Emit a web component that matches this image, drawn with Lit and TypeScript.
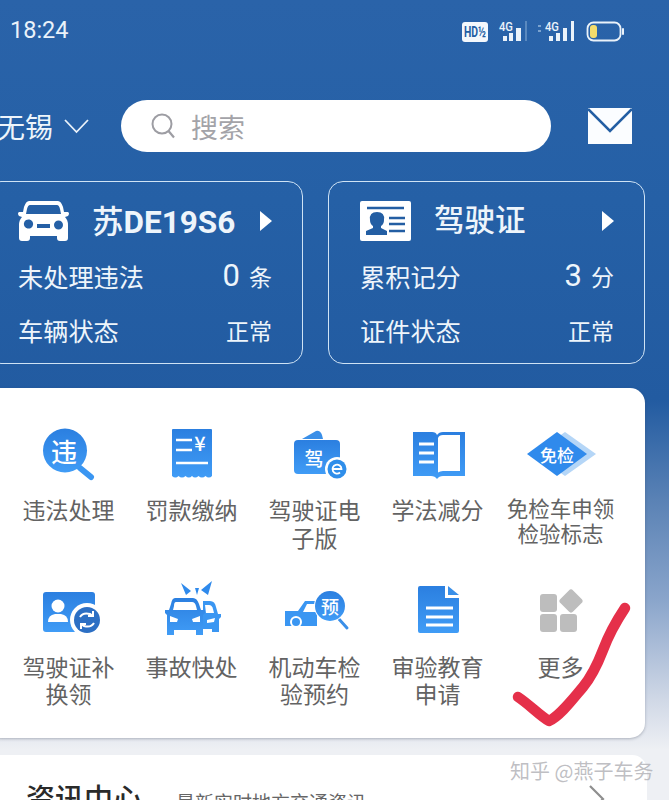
import { LitElement, html, css, svg } from "lit";
import { customElement } from "lit/decorators.js";

const grad = svg`<defs><linearGradient id="b" x1="0" y1="0" x2="0" y2="1"><stop offset="0" stop-color="#2b7fe0"/><stop offset="1" stop-color="#409cf6"/></linearGradient></defs>`;

const iconText = (x: number, y: number, size: number, t: string) =>
  svg`<text x=${x} y=${y} font-size=${size} fill="#fff" text-anchor="middle" dominant-baseline="central" font-weight="500" font-family="'Noto Sans CJK SC', sans-serif">${t}</text>`;

const icons: Record<string, unknown> = {
  weifa: svg`${grad}<path d="M41 41 L52 50" stroke="#3a96f2" stroke-width="6" stroke-linecap="round"/><circle cx="26" cy="23.5" r="22" fill="url(#b)"/>${iconText(25, 23, 26, "违")}`,
  fine: svg`${grad}<path d="M11 2 H49 Q50 2 50 3 V49 Q47 52 43.500 49 Q40 52 36.500 49 Q33 52 30 49 Q27 52 23.500 49 Q20 52 16.500 49 Q13.500 52 10 49 V3 Q10 2 11 2 Z" fill="url(#b)"/><path d="M14 13 H30 M14 23 H30 M14 36 H46" stroke="#fff" stroke-width="2.400"/>${iconText(38, 15, 20, "¥")}`,
  wallet: svg`${grad}<path d="M17 12 L31 4 Q35 3 37 8 L38 12 Z" fill="#3a8fe8"/><rect x="9" y="13" width="46" height="34" rx="4" fill="url(#b)"/>${iconText(29, 30, 19, "驾")}<circle cx="52" cy="42" r="12" fill="#fff"/><circle cx="52" cy="42" r="9.500" fill="#2f8eea"/><path d="M47.500 42 H56.500 A4.500 4.500 0 1 0 55 45.500" fill="none" stroke="#fff" stroke-width="1.800"/>`,
  book: svg`${grad}<path d="M5 5 H24 Q28 5 29 8 Q31 5 35 5 H57 V49 H35 Q31 49 29 52 Q27 49 23 49 H5 Z" fill="url(#b)"/><path d="M30 11 Q31 8 35 8 H52 V44 H35 Q32 44 30 45.500 Z" fill="#fff"/><path d="M11 17 H26 M11 26 H26 M11 35 H26" stroke="#fff" stroke-width="3.200"/>`,
  exempt: svg`<path d="M34 5 L65 27 L34 49 L3 27 Z" fill="#b5d6f7"/><path d="M26 5 L56 27 L26 49 L-4 27 Z" fill="#2f8aec"/>${iconText(26, 27, 17, "免检")}`,
  renew: svg`${grad}<rect x="4" y="8" width="52" height="40" rx="3" fill="url(#b)"/><circle cx="19" cy="22" r="6.500" fill="#fff"/><path d="M9 38 Q9 31 16 30 H22 Q29 31 29 38 Z" fill="#fff"/><circle cx="48" cy="36" r="17" fill="#fff"/><circle cx="48" cy="36" r="13" fill="#2c6fc4"/><path d="M41 33 Q44 28 51 30 L54 32 M54 27 V32 H49 M55 39 Q52 44 45 42 L42 40 M42 45 V40 H47" fill="none" stroke="#fff" stroke-width="2"/>`,
  crash: svg`${grad}<path d="M19 -1 L29 7 L24 11 Z M50 -3 L46 11 L39 6 Z M33 4 L37 4 L35 11 Z" fill="#2f8aec"/><path d="M41 17 H48 Q53 17 54 23 L56 30 H59 V33 L57 35 V48 H50 V45 H41 Z" fill="#3a96f2"/><path d="M43 21 H47 Q50 21 51 25 L52 29 H44 Z" fill="#fff"/><path d="M45 36 L53 34 L52 38 L45 39 Z" fill="#fff"/><path d="M13 14 H31 Q35 14 37 20 L39 26 H43 V29 L41 31 V51 H34 V46 H12 V51 H5 V31 L3 29 V26 H7 L9 20 Q10 14 13 14 Z" fill="url(#b)"/><path d="M14 18 H30 Q33 18 34 22 L35 26 H11 L12 22 Q12 18 14 18 Z" fill="#fff"/><path d="M8 32 L16 35 L15 38 H8 Z M38 32 L30 35 L31 38 H38 Z" fill="#fff"/>`,
  inspect: svg`${grad}<path d="M0 27 H13 L20 17 H32 V42 H0 Z" fill="#3a96f2"/><path d="M22 20 H32 V28 H18 Z" fill="#fff"/><circle cx="11" cy="38" r="6" fill="#fff"/><circle cx="11" cy="38" r="4" fill="#3a96f2"/><path d="M53 34 L62 44" stroke="#3a8fe8" stroke-width="3" stroke-linecap="round"/><circle cx="45" cy="22" r="16" fill="#fff"/><circle cx="45" cy="22" r="15" fill="url(#b)"/>${iconText(45, 22, 18, "预")}`,
  doc: svg`${grad}<path d="M12 2 H37 V14 H51 V47 Q51 49 49 49 H12 Q10 49 10 47 V4 Q10 2 12 2 Z" fill="url(#b)"/><path d="M40 2 L51 11 H40 Z" fill="#3a8fe8"/><path d="M18 24 H45 M18 33 H45 M18 41 H45" stroke="#fff" stroke-width="2.800"/>`,
  more: svg`<g fill="#bdbdbd"><rect x="9" y="10" width="17" height="18" rx="3"/><rect x="9" y="30" width="17" height="18" rx="3"/><rect x="29" y="30" width="17" height="18" rx="3"/><rect x="31" y="8" width="18" height="18" rx="3" transform="rotate(45 40 17)"/></g>`,
};

const items = [
  { icon: "weifa", label: "违法处理" },
  { icon: "fine", label: "罚款缴纳" },
  { icon: "wallet", label: "驾驶证电子版" },
  { icon: "book", label: "学法减分" },
  { icon: "exempt", label: "免检车申领检验标志", small: true },
  { icon: "renew", label: "驾驶证补换领" },
  { icon: "crash", label: "事故快处" },
  { icon: "inspect", label: "机动车检验预约" },
  { icon: "doc", label: "审验教育申请" },
  { icon: "more", label: "更多" },
];

const carIcon = svg`<svg width="51" height="42" viewBox="0 0 51 42"><path fill="#fff" fill-rule="evenodd" d="M11 1 H40 Q43 1 45 7 L46 12 H50 Q52 13 50 16 L47 17 Q50 20 50 25 V38 Q50 41 47 41 H42 Q39 41 39 38 V36 H12 V38 Q12 41 9 41 H4 Q1 41 1 38 V25 Q1 20 4 17 L1 16 Q-1 13 1 12 H5 L6 7 Q8 1 11 1 Z M12 5 Q10 5 9 9 L8 14 H43 L42 9 Q41 5 39 5 Z M6 23 A4 4 0 1 0 15 25 A4 4 0 1 0 6 23 Z M36 25 A4 4 0 1 0 45 25 A4 4 0 1 0 36 25 Z M19 24 V28 H32 V24 Z"/></svg>`;

const licenseIcon = svg`<svg width="51" height="40" viewBox="0 0 51 40"><path fill="#fff" d="M2 0 H49 Q51 0 51 2 V38 Q51 40 49 40 H2 Q0 40 0 38 V2 Q0 0 2 0 Z"/><path d="M7 7 H44" stroke="#235ea3" stroke-width="2.500"/><path fill="#235ea3" d="M17 11 Q25 11 24 19 Q24 23 21 25 V27 L27 30 V34 H6 V30 L13 27 V25 Q10 23 10 19 Q9 11 17 11 Z"/><path d="M29 17 H45 M29 23 H45 M29 30 H45" stroke="#235ea3" stroke-width="2.500"/></svg>`;

const arrow = svg`<svg width="12" height="20" viewBox="0 0 12 20"><path d="M0 0 L12 10 L0 20 Z" fill="#fff"/></svg>`;

@customElement("app-root")
export class AppRoot extends LitElement {
  static styles = css`
    :host {
      display: block;
      font-family: "Noto Sans CJK SC", sans-serif;
    }
    .page {
      position: relative;
      width: 669px;
      height: 800px;
      overflow: hidden;
      background: linear-gradient(
        180deg,
        #2a63a9 0,
        #2560a6 200px,
        #225ba1 400px,
        #5a82b5 500px,
        #8aa5cb 600px,
        #d0d8e6 700px,
        #eef0f4 750px
      );
    }
    .status {
      height: 60px;
      padding-left: 10px;
      box-sizing: border-box;
      display: flex;
      align-items: center;
      justify-content: space-between;
      color: #eaf2fa;
      font: 23.500px/1 Roboto, sans-serif;
    }
    .status span {
      margin-top: 2px;
    }
    .status svg {
      margin-right: 42px;
      margin-top: 2px;
    }
    .search-row {
      margin-top: 40px;
      height: 52px;
      display: flex;
      align-items: center;
      margin-left: -3px;
    }
    .city {
      color: #eef5fb;
      font-size: 28px;
      line-height: 1;
      width: 54px;
      white-space: nowrap;
    }
    .chev {
      margin-left: 13px;
    }
    .pill {
      margin-left: 32px;
      width: 430px;
      height: 52px;
      background: #fff;
      border-radius: 26px;
      display: flex;
      align-items: center;
      color: #a3a3a8;
      font-size: 27px;
      padding-left: 30px;
      box-sizing: border-box;
    }
    .pill span {
      margin-left: 15px;
    }
    .mail {
      margin-left: 37px;
    }
    .cards {
      margin: 29px 0 0 -14px;
      display: flex;
      gap: 25px;
    }
    .card {
      width: 317px;
      height: 183px;
      box-sizing: border-box;
      border: 1.5px solid #cfe3f5;
      border-radius: 15px;
      padding: 18px 30px 0 31px;
      color: #eef5fb;
    }
    .title {
      height: 42px;
      margin-bottom: 7px;
      display: flex;
      align-items: center;
      gap: 23px;
      font-size: 30.500px;
      font-weight: 500;
    }
    .title span {
      margin-top: -6px;
    }
    .title b {
      margin-top: -4px;
      font-weight: 700;
      font-family: Roboto, "Noto Sans CJK SC", sans-serif;
      font-size: 31.500px;
    }
    .title b span {
      margin: 0;
      font-family: "Noto Sans CJK SC", sans-serif;
      font-weight: 500;
    }
    .title svg:last-child {
      margin-left: auto;
    }
    .row {
      display: flex;
      align-items: center;
      justify-content: space-between;
      height: 54px;
      font-size: 25.200px;
    }
    .row i {
      font-style: normal;
      font-size: 23px;
    }
    .row i em {
      font: 31px/1 Roboto, sans-serif;
      margin-right: 9px;
    }
    .panel {
      margin: 24px 0 0 -14px;
      width: 659px;
      height: 350px;
      box-sizing: border-box;
      padding: 39px 0 0 21px;
      background: #fff;
      border-radius: 15px;
      box-shadow: 0 1px 3px rgba(60, 70, 90, 0.35);
      display: grid;
      grid-template-columns: repeat(5, 123px);
      grid-auto-rows: 156.500px;
    }
    .cell {
      display: flex;
      flex-direction: column;
      align-items: center;
    }
    .cell svg {
      overflow: visible;
      flex: none;
    }
    .label {
      margin-top: 13px;
      width: 94px;
      text-align: center;
      font-size: 23px;
      line-height: 27.500px;
      color: #636363;
    }
    .label.small {
      width: 110px;
      margin-top: 12px;
      font-size: 21.500px;
      line-height: 25px;
    }
    .news {
      margin: 17px 0 0 -14px;
      width: 661px;
      height: 120px;
      box-sizing: border-box;
      padding: 22px 0 0 40px;
      background: #fff;
      border-radius: 15px;
      display: flex;
      align-items: baseline;
      color: #2a2a2a;
    }
    .news h2 {
      margin: 0;
      font-size: 29px;
      line-height: 40px;
      font-weight: 500;
    }
    .news p {
      margin: 0 0 0 34px;
      font-size: 19px;
      color: #666;
    }
    .news svg {
      margin-left: auto;
      margin-right: 42px;
      align-self: flex-start;
      margin-top: 8px;
    }
    .watermark {
      position: absolute;
      left: 510px;
      top: 757px;
      font-size: 20px;
      line-height: 28px;
      color: rgba(170, 170, 175, 0.75);
      white-space: nowrap;
    }
    .check {
      position: absolute;
      left: 0;
      top: 0;
      pointer-events: none;
    }
  `;

  private status() {
    return svg`<svg width="170" height="30" viewBox="457 16 170 30" font-family="Roboto, sans-serif">
      <rect x="462" y="22" width="26" height="20" rx="3" fill="#f4f8fc"/>
      <text x="464" y="37" font-size="14" font-weight="700" fill="#235ea3" textLength="22" lengthAdjust="spacingAndGlyphs">HD½</text>
      <text x="499" y="31" font-size="13" font-weight="500" fill="#eaf2fa" textLength="14" lengthAdjust="spacingAndGlyphs">4G</text>
      <path d="M503 36h4v5h-4zM509 33h4v8h-4zM516 28h5v13h-5z" fill="#eaf2fa"/>
      <path d="M525 21h2v20h-2z" fill="#7ba3cf" opacity=".6"/>
      <path d="M538 25h3v2h-3zM538 30h3v2h-3z" fill="#7ba3cf"/>
      <text x="545" y="31" font-size="13" font-weight="500" fill="#eaf2fa" textLength="14" lengthAdjust="spacingAndGlyphs">4G</text>
      <path d="M549 36h4v5h-4zM556 33h4v8h-4zM563 28h4v13h-4zM571 21h3v20h-3z" fill="#eaf2fa"/>
      <rect x="587.500" y="22.500" width="33" height="18" rx="6" fill="none" stroke="#eaf2fa" stroke-width="1.800"/>
      <rect x="590" y="25" width="7" height="13" rx="3" fill="#f4dc6c"/>
      <rect x="622" y="28" width="2" height="7" rx="1" fill="#eaf2fa"/>
    </svg>`;
  }

  render() {
    return html`
      <div class="page">
        <div class="status"><span>18:24</span>${this.status()}</div>

        <div class="search-row">
          <span class="city">无锡</span>
          <svg class="chev" width="25" height="16" viewBox="0 0 25 16"><path d="M1 2 L12.500 14 L24 2" fill="none" stroke="#eaf2fa" stroke-width="1.800"/></svg>
          <div class="pill">
            <svg width="25" height="26" viewBox="0 0 25 26"><circle cx="11" cy="11" r="9.500" fill="none" stroke="#9d9da3" stroke-width="2"/><path d="M17.500 18 L23 24.500" stroke="#9d9da3" stroke-width="2.200"/></svg>
            <span>搜索</span>
          </div>
          <svg class="mail" width="44" height="36" viewBox="0 0 44 36"><path d="M0 0 H44 V36 H0 Z" fill="#fbfdff"/><path d="M0 1 L22 23 L44 1" fill="none" stroke="#235ea3" stroke-width="2.500"/></svg>
        </div>

        <div class="cards">
          <div class="card">
            <div class="title">${carIcon}<b><span>苏</span>DE19S6</b>${arrow}</div>
            <div class="row"><span>未处理违法</span><i><em>0</em>条</i></div>
            <div class="row"><span>车辆状态</span><i>正常</i></div>
          </div>
          <div class="card">
            <div class="title">${licenseIcon}<span>驾驶证</span>${arrow}</div>
            <div class="row"><span>累积记分</span><i><em>3</em>分</i></div>
            <div class="row"><span>证件状态</span><i>正常</i></div>
          </div>
        </div>

        <div class="panel">
          ${items.map(
            (it) => html`
              <div class="cell">
                <svg width="60" height="56" viewBox="0 0 60 56">${icons[it.icon]}</svg>
                <div class="label ${it.small ? "small" : ""}">${it.label}</div>
              </div>
            `
          )}
        </div>

        <div class="news">
          <h2>资讯中心</h2>
          <p>最新实时地方交通资讯</p>
          <svg width="16" height="28" viewBox="0 0 16 28"><path d="M1 1 L14 14 L1 27" fill="none" stroke="#8f8f8f" stroke-width="2.200"/></svg>
        </div>

        <div class="watermark">知乎 @燕子车务</div>

        <svg class="check" width="669" height="800" viewBox="0 0 669 800">
          <path d="M518 697 C530 705 540 716 549 721 C560 716 572 700 583 687 C592 676 598 663 603 650 C609 634 617 620 625 608" fill="none" stroke="#e5304a" stroke-width="10.500" stroke-linecap="round" stroke-linejoin="round"/>
        </svg>
      </div>
    `;
  }
}
